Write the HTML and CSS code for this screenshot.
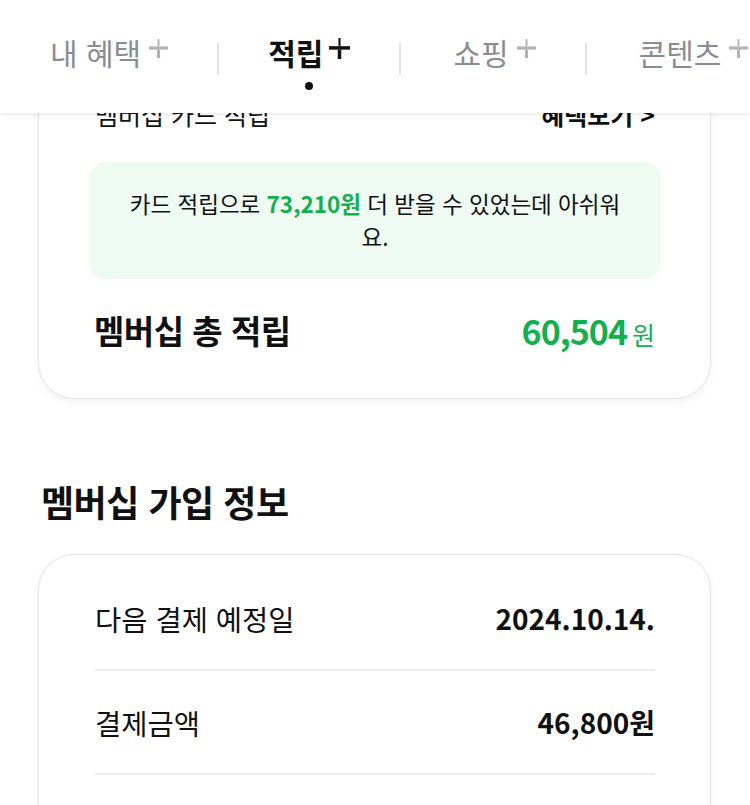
FILE: index.html
```html
<!DOCTYPE html>
<html lang="ko">
<head>
<meta charset="utf-8">
<link rel="stylesheet" href="styles.css">
</head>
<body>
<header class="tabs">
  <div class="tab">
    <span class="tab-label">내 혜택</span>
    <svg class="plus" viewBox="0 0 18 18"><path d="M0 7h18v3H0z"/><path d="M8.1 0h1.8v7H8.1z"/><path d="M7.5 10h3v8h-3z"/></svg>
  </div>
  <span class="divider"></span>
  <div class="tab active">
    <span class="tab-label">적립</span>
    <svg class="plus" viewBox="0 0 18 18"><path d="M0 7h18v3H0z"/><path d="M8.1 0h1.8v7H8.1z"/><path d="M7.5 10h3v8h-3z"/></svg>
    <span class="dot"></span>
  </div>
  <span class="divider"></span>
  <div class="tab">
    <span class="tab-label">쇼핑</span>
    <svg class="plus" viewBox="0 0 18 18"><path d="M0 7h18v3H0z"/><path d="M8.1 0h1.8v7H8.1z"/><path d="M7.5 10h3v8h-3z"/></svg>
  </div>
  <span class="divider"></span>
  <div class="tab">
    <span class="tab-label">콘텐츠</span>
    <svg class="plus" viewBox="0 0 18 18"><path d="M0 7h18v3H0z"/><path d="M8.1 0h1.8v7H8.1z"/><path d="M7.5 10h3v8h-3z"/></svg>
  </div>
</header>

<main class="page">
  <section class="card card-earn">
    <div class="row row-head">
      <span class="label">멤버십 카드 적립</span>
      <span class="link">혜택보기 &gt;</span>
    </div>
    <div class="notice">카드 적립으로 <strong class="green">73,210원</strong> 더 받을 수 있었는데 아쉬워요.</div>
    <div class="row row-total">
      <span class="total-label">멤버십 총 적립</span>
      <span class="total-value"><strong>60,504</strong><span class="won">원</span></span>
    </div>
  </section>

  <h2 class="section-title">멤버십 가입 정보</h2>

  <section class="card card-info">
    <div class="info-row">
      <span class="info-label">다음 결제 예정일</span>
      <span class="info-value">2024.10.14.</span>
    </div>
    <div class="info-row">
      <span class="info-label">결제금액</span>
      <span class="info-value">46,800원</span>
    </div>
    <div class="info-row">
      <span class="info-label">&nbsp;</span>
      <span class="info-value">&nbsp;</span>
    </div>
  </section>
</main>
</body>
</html>
```

FILE: styles.css
```css
* { box-sizing: border-box; }
html, body { margin: 0; padding: 0; background: #fff; }
body {
  font-family: "Noto Sans CJK KR", "Noto Sans", sans-serif;
  color: #111;
  width: 750px;
  height: 805px;
  overflow: hidden;
  position: relative;
}

.tabs {
  position: absolute;
  top: 0; left: 0; right: 0;
  height: 113px;
  background: #fff;
  display: flex;
  align-items: center;
  white-space: nowrap;
  overflow: hidden;
  box-shadow: 0 2px 5px rgba(0,0,0,0.09);
  z-index: 2;
  padding-bottom: 10px;
}
.tab {
  position: relative;
  display: flex;
  align-items: center;
  padding: 0 49px;
  color: #8a8c93;
  font-size: 30px;
  flex: none;
}
.tab:first-child { padding-left: 50px; }
.tab:nth-child(n+5) { padding-left: 52px; }
.tab-label { line-height: 40px; }
.plus {
  width: 19px; height: 19px;
  margin-left: 8px;
  margin-top: -7px;
  fill: #b3b3b6;
}
.tab.active { color: #111; font-weight: 700; }
.tab.active .plus { fill: #111; width: 21px; height: 21px; margin-left: 6px; }
.dot {
  position: absolute;
  left: 50%;
  top: 50px;
  width: 8px; height: 8px;
  margin-left: -4px;
  border-radius: 50%;
  background: #111;
}
.divider {
  flex: none;
  width: 2px;
  height: 32px;
  background: #e3e3e3;
  margin-top: 14px;
}

.page {
  padding: 0 39px 0 38px;
}

.card {
  background: #fff;
  border: 1.5px solid #e4e4e6;
  border-radius: 36px;
  box-shadow: 0 3px 8px rgba(0,0,0,0.05);
}
.card-earn {
  margin-top: 40px;
  padding: 0 49px 38px 50px;
}
.row {
  display: flex;
  justify-content: space-between;
  align-items: center;
}
.row-head {
  height: 95px;
  padding: 0 6px;
  font-size: 25px;
  padding-top: 50px;
}
.row-head .link { font-weight: 700; }

.notice {
  margin-top: 26px;
  background: #effaf3;
  border-radius: 16px;
  padding: 25px 38px 26px;
  text-align: center;
  font-size: 22.5px;
  line-height: 33px;
  color: #111;
}
.green { color: #12b04f; font-weight: 700; }

.row-total {
  margin-top: 21px;
  height: 60px;
  padding: 0 6px 0 5px;
}
.total-label {
  font-size: 33px;
  font-weight: 700;
  letter-spacing: -0.5px;
}
.total-value { color: #12b04f; display: flex; align-items: baseline; }
.total-value strong { font-size: 34px; font-weight: 700; letter-spacing: -1px; }
.won { font-size: 25px; margin-left: 5px; }

.section-title {
  margin: 80px 0 0 3px;
  font-size: 36px;
  font-weight: 700;
  line-height: 44px;
  letter-spacing: -0.5px;
}

.card-info {
  margin-top: 31px;
  padding: 12px 55px 0 56px;
}
.info-row {
  height: 104px;
  display: flex;
  justify-content: space-between;
  align-items: center;
  border-bottom: 2px solid #ececec;
}
.info-label { font-size: 28.5px; }
.info-value { font-size: 28px; font-weight: 700; }
```
